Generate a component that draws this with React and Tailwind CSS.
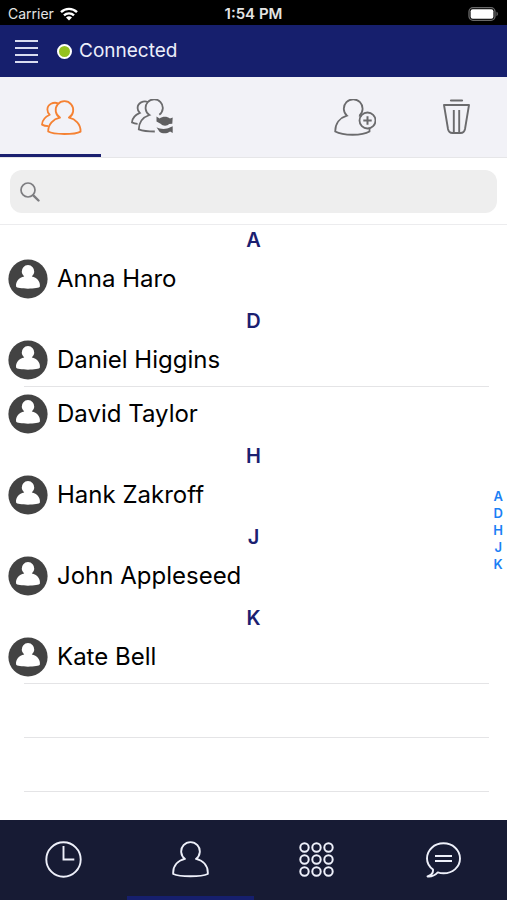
// Contacts screen: status bar, connection header, toolbar, search, grouped list, bottom tabs

import { useState } from "react";

const SECTIONS = [
  { letter: "A", names: ["Anna Haro"] },
  { letter: "D", names: ["Daniel Higgins", "David Taylor"] },
  { letter: "H", names: ["Hank Zakroff"] },
  { letter: "J", names: ["John Appleseed"] },
  { letter: "K", names: ["Kate Bell"] },
];

// ─── Icons ────────────────────────────────────────────────────────────────────
function WifiIcon() {
  return (
    <svg width="18" height="14" viewBox="0 0 18 14" fill="none" stroke="#fff" strokeWidth="2.4">
      <path d="M1 5.2a11.4 11.4 0 0 1 16 0" />
      <path d="M4 8.4a7.2 7.2 0 0 1 10 0" />
      <path d="M9 13.6 6 10.6a4.3 4.3 0 0 1 6 0z" fill="#fff" stroke="none" />
    </svg>
  );
}

function BatteryIcon() {
  return (
    <svg width="31" height="14" viewBox="0 0 31 14">
      <rect x="1" y="0.7" width="26" height="12.6" rx="4" fill="none" stroke="#6a6a6a" strokeWidth="1.3" />
      <rect x="2.6" y="2.3" width="22.8" height="9.4" rx="2" fill="#fff" />
      <path d="M28.5 4.8c1.8.6 1.8 3.8 0 4.4z" fill="#6a6a6a" />
    </svg>
  );
}

function PeopleIcon() {
  return (
    <svg width="41" height="36" viewBox="0 0 41 36" fill="none" stroke="#f58233" strokeWidth="1.8" strokeLinejoin="round">
      <path d="M19 17.600a8.800 8.800 0 1 1 8.900 0C34.500 19 39.800 24 39.600 31.600 34 34.800 12.500 34.800 7.200 31.600 7 24 12.300 19 19 17.600z" />
      <path d="M17 3.300C12.500 1.600 6.400 4.200 6.400 9.600c0 2.200.9 4 2.300 5.200C4 17 1.200 20.500 1 24.600c1.600.9 3.600 1.400 6.400 1.600" />
    </svg>
  );
}

function PeopleSyncIcon() {
  return (
    <svg width="42" height="36" viewBox="0 0 42 36" fill="none" stroke="#6b6b6d" strokeWidth="1.8">
      <path d="M28.300 15.800a8.600 8.600 0 1 0-9.900.2C12.500 18 8 22.800 7.800 30.300c4 1.600 9.500 2.200 16 2.200" />
      <path d="M17 3C12.500 1.200 6.600 3.800 6.600 8.900c0 2.100.8 3.700 2.200 5C4 16 1.200 19.200 1 23.400c1.700.9 3.600 1.300 5.600 1.400" />
      <g fill="#5f5f61" stroke="none">
        <path d="M25.500 17.500 28.500 19.500c3.200-2.200 7.600-2.200 10.500 0l2.700-1-.4 6.300-3.300.2c-1.400 2.300-6.500 2.300-8 0L25.500 22.500z" />
        <path d="M25.500 28.300c4 2.300 10 2.300 13.800 0l2.400-1v6.700l-2.600-1.600c-3.300 2.500-8 2.300-10.600.3z" />
      </g>
    </svg>
  );
}

function AddPersonIcon() {
  return (
    <svg width="42" height="37" viewBox="0 0 42 37" fill="none" stroke="#6b6b6d" strokeWidth="1.8">
      <path d="M25.500 16.700a9.400 9.400 0 1 0-12.600 0C6 18.800 1.200 24.500 1.200 32.500c8 4.300 27 4.300 34.300 0V29" />
      <path d="M25 16.500 27.300 17.500" />
      <circle cx="33.500" cy="21.500" r="8" />
      <path d="M33.500 17.300v8.400M29.300 21.500h8.400" strokeWidth="2" />
    </svg>
  );
}

function TrashIcon() {
  return (
    <svg width="27" height="36" viewBox="0 0 27 36" fill="none" stroke="#6b6b6d" strokeWidth="1.9" strokeLinejoin="round">
      <path d="M8 1.500h11" strokeWidth="2.200" strokeLinecap="round" />
      <path d="M1 6h25l-4 24c-.6 3-2 4-4.500 4h-8C7 34 5.600 33 5 30z" />
      <path d="M10.800 11v22M16.200 11v22" />
    </svg>
  );
}

function SearchIcon() {
  return (
    <svg className="shrink-0" width="20" height="20" viewBox="0 0 20 20" fill="none" stroke="#7d7d80" strokeLinecap="round">
      <circle cx="8" cy="8" r="7" strokeWidth="1.700" />
      <path d="m13.300 13.300 5.200 5.200" strokeWidth="2.400" />
    </svg>
  );
}

function Avatar() {
  return (
    <svg className="shrink-0" width="40" height="40" viewBox="0 0 40 40">
      <circle cx="20" cy="20" r="19.600" fill="#434343" />
      <path
        d="M16.200 17.400a6.300 6.300 0 1 1 7.600 0C29 18.300 32.500 22.500 31.900 27.600 31.500 30.300 8.500 30.300 8.100 27.600 7.500 22.500 11 18.300 16.200 17.400z"
        fill="#fff"
      />
    </svg>
  );
}

function ClockIcon() {
  return (
    <svg width="37" height="37" viewBox="0 0 37 37" fill="none" stroke="#eef0fa" strokeWidth="1.900">
      <circle cx="18.500" cy="18.500" r="17.200" />
      <path d="M18.500 5v13.500h10.800" />
    </svg>
  );
}

function PersonIcon() {
  return (
    <svg width="37" height="37" viewBox="0 0 37 37" fill="none" stroke="#eef0fa" strokeWidth="1.900" strokeLinejoin="round">
      <path d="M13 17.900a9.300 9.300 0 1 1 11 0C31 19.500 36.300 24.500 35.800 33 29 36 8 36 1.200 33 .7 24.500 6 19.500 13 17.900z" />
    </svg>
  );
}

function KeypadIcon() {
  const steps = [5.5, 17.5, 29.5];
  return (
    <svg width="35" height="35" viewBox="0 0 35 35" fill="none" stroke="#eef0fa" strokeWidth="2">
      {steps.map((y) => steps.map((x) => <circle key={`${x}-${y}`} cx={x} cy={y} r="4.200" />))}
    </svg>
  );
}

function ChatIcon() {
  return (
    <svg width="35" height="36" viewBox="0 0 35 36" fill="none" stroke="#eef0fa" strokeWidth="1.900" strokeLinejoin="round">
      <path d="M7 27.500C3.300 24.800 1 21 1 16.500 1 8 8.300 1.300 17.500 1.300S34 8 34 16.500s-7.300 14.800-16.500 14.800c-2 0-3.900-.3-5.700-.9C9.500 32.800 6 35 1.500 34.500 4.500 33.500 7.400 31 7 27.500z" />
      <path d="M9 14h17M9 19h17" strokeWidth="2.200" />
    </svg>
  );
}

// ─── List rows ────────────────────────────────────────────────────────────────
function ContactRow({ name, divider }) {
  return (
    <li>
      <button type="button" className="relative flex h-[54px] w-full items-center gap-[9px] px-2 text-left text-2xl text-black">
        <Avatar />
        <span>{name}</span>
        {divider && <span className="absolute bottom-0 left-6 right-[18px] border-b border-[#e4e4e6]" />}
      </button>
    </li>
  );
}

const TABS = [
  { id: "recents", label: "Recents", Icon: ClockIcon },
  { id: "contacts", label: "Contacts", Icon: PersonIcon },
  { id: "keypad", label: "Keypad", Icon: KeypadIcon },
  { id: "chat", label: "Messages", Icon: ChatIcon },
];

// ─── Page ─────────────────────────────────────────────────────────────────────
export default function App() {
  const [query, setQuery] = useState("");
  const [tab, setTab] = useState("contacts");

  const sections = SECTIONS.map((s) => ({
    ...s,
    names: s.names.filter((n) => n.toLowerCase().includes(query.toLowerCase())),
  })).filter((s) => s.names.length > 0);

  return (
    <div className="flex min-h-screen flex-col bg-white font-[Inter,'Liberation_Sans',sans-serif]">
      {/* Status bar */}
      <div className="grid h-[25px] grid-cols-3 items-center bg-black px-2 pt-[2px] text-sm text-[#e4e4e4]">
        <div className="flex items-center gap-[6px]">
          <span>Carrier</span>
          <WifiIcon />
        </div>
        <span className="text-center text-[15px] font-semibold">1:54 PM</span>
        <div className="flex justify-end">
          <BatteryIcon />
        </div>
      </div>

      {/* Header */}
      <header className="flex h-[52px] items-center bg-[#161f6d] pl-[15px]">
        <button type="button" aria-label="Menu" className="flex flex-col gap-[5px]">
          <span className="h-[2px] w-[23px] bg-[#d9dcf0]" />
          <span className="h-[2px] w-[23px] bg-[#d9dcf0]" />
          <span className="h-[2px] w-[23px] bg-[#d9dcf0]" />
          <span className="h-[2px] w-[23px] bg-[#d9dcf0]" />
        </button>
        <span className="ml-[19px] size-[15px] rounded-full border-2 border-white bg-[#94c11f]" />
        <h1 className="ml-[7px] text-[19px] text-[#eceefa]">Connected</h1>
      </header>

      {/* Toolbar */}
      <div className="grid h-[81px] grid-cols-5 border-b border-[#e6e6e8] bg-[#f2f2f7]">
        <button type="button" aria-label="All contacts" className="flex items-center justify-center border-b-[3px] border-[#1b2070] pl-[22px] pt-1">
          <PeopleIcon />
        </button>
        <button type="button" aria-label="Synced contacts" className="flex items-center justify-center">
          <PeopleSyncIcon />
        </button>
        <button type="button" aria-label="Add contact" className="col-start-4 flex items-center justify-center">
          <AddPersonIcon />
        </button>
        <button type="button" aria-label="Delete" className="flex items-center justify-center">
          <TrashIcon />
        </button>
      </div>

      {/* Search */}
      <div className="border-b border-[#ececee] px-[10px] pb-[11px] pt-3">
        <label className="flex h-[43px] items-center gap-2 rounded-xl bg-[#eeeeee] px-[10px]">
          <SearchIcon />
          <input
            type="search"
            aria-label="Search contacts"
            value={query}
            onChange={(e) => setQuery(e.target.value)}
            className="min-w-0 flex-1 bg-transparent text-xl outline-none"
          />
        </label>
      </div>

      {/* Contact list */}
      <main className="relative flex-1">
        {sections.map((section, s) => (
          <section key={section.letter} id={section.letter}>
            <h2 className="h-[27px] text-center text-xl font-semibold leading-[30px] text-[#1b2070]">{section.letter}</h2>
            <ul>
              {section.names.map((name, i) => (
                <ContactRow
                  key={name}
                  name={name}
                  divider={i < section.names.length - 1 || s === sections.length - 1}
                />
              ))}
            </ul>
          </section>
        ))}
        <div className="ml-6 mr-[18px] h-[54px] border-b border-[#e4e4e6]" />
        <div className="ml-6 mr-[18px] h-[54px] border-b border-[#e4e4e6]" />

        {/* Letter index */}
        <nav aria-label="Index" className="absolute inset-y-0 right-1 flex flex-col justify-center pt-4 text-center text-[13px] font-semibold leading-[17px] text-[#1a80f5]">
          {SECTIONS.map(({ letter }) => (
            <a key={letter} href={`#${letter}`}>{letter}</a>
          ))}
        </nav>
      </main>

      {/* Bottom tabs */}
      <nav className="grid h-20 grid-cols-4 bg-[#171b34]">
        {TABS.map(({ id, label, Icon }) => (
          <button
            key={id}
            type="button"
            aria-label={label}
            onClick={() => setTab(id)}
            className={`flex items-center justify-center border-b-4 pt-[3px] ${
              tab === id ? "border-[#161f6d]" : "border-transparent"
            }`}
          >
            <Icon />
          </button>
        ))}
      </nav>
    </div>
  );
}
